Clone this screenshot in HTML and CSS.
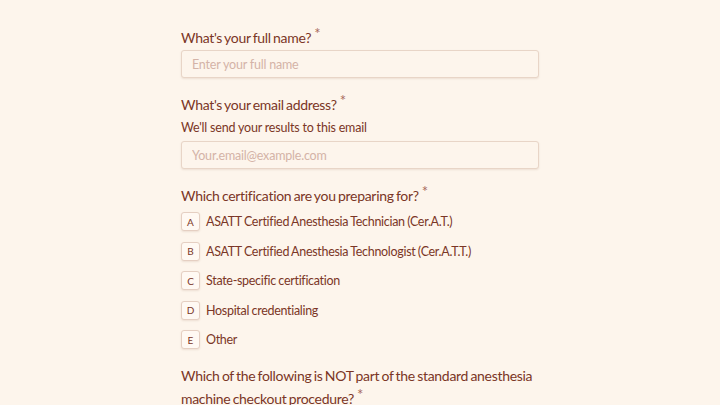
FILE: index.html
```html
<!DOCTYPE html>
<html lang="en">
<head>
    <meta charset="UTF-8">
    <title>Certification Quiz</title>
    <link rel="stylesheet" href="styles.css">
</head>
<body>
    <form class="quiz">
        <div class="question">
            <label class="label" for="fullname">What's your full name?<span class="req">*</span></label>
            <input class="field" id="fullname" type="text" placeholder="Enter your full name">
        </div>

        <div class="question">
            <label class="label" for="email">What's your email address?<span class="req">*</span></label>
            <p class="hint">We'll send your results to this email</p>
            <input class="field" id="email" type="email" placeholder="Your.email@example.com">
        </div>

        <div class="question">
            <div class="label">Which certification are you preparing for?<span class="req">*</span></div>
            <div class="options">
                <div class="option"><span class="key">A</span>ASATT Certified Anesthesia Technician (Cer.A.T.)</div>
                <div class="option"><span class="key">B</span>ASATT Certified Anesthesia Technologist (Cer.A.T.T.)</div>
                <div class="option"><span class="key">C</span>State-specific certification</div>
                <div class="option"><span class="key">D</span>Hospital credentialing</div>
                <div class="option"><span class="key">E</span>Other</div>
            </div>
        </div>

        <div class="question">
            <div class="label">Which of the following is NOT part of the standard anesthesia machine checkout procedure?<span class="req">*</span></div>
        </div>
    </form>
</body>
</html>
```

FILE: styles.css
```css
body {
    margin: 0;
    background-color: #fdf5ec;
    font-family: Lato, sans-serif;
    color: #7b3626;
}
.quiz {
    width: 358px;
    margin: 0 auto;
    padding-top: 24px;
}
.question {
    margin-bottom: 13px;
}
.label {
    display: block;
    font-size: 14px;
    line-height: 19px;
    letter-spacing: -0.3px;
    word-spacing: -1px;
    margin-bottom: 3px;
}
.req {
    color: #a86a5a;
    font-size: 15px;
    vertical-align: 4px;
    margin-left: 3px;
}
.hint {
    font-size: 12.5px;
    line-height: 16px;
    letter-spacing: -0.2px;
    margin: 6px 0 5px;
}
.field {
    display: block;
    box-sizing: border-box;
    width: 100%;
    height: 28px;
    padding: 0 10px;
    border: 1px solid #e8d5c7;
    border-radius: 3px;
    background-color: #fdf5ec;
    box-shadow: 0 1px 2px rgba(120, 70, 40, 0.12);
    font-family: inherit;
    font-size: 12.5px;
    letter-spacing: -0.2px;
    color: #7b3626;
}
.field::placeholder {
    color: #d4b3a7;
}
.options {
    display: flex;
    flex-direction: column;
    gap: 10.5px;
    padding: 4px 0 4px;
}
.option {
    display: flex;
    align-items: center;
    font-size: 12.5px;
    letter-spacing: -0.3px;
    word-spacing: -0.5px;
    height: 19px;
}
.key {
    display: flex;
    align-items: center;
    justify-content: center;
    box-sizing: border-box;
    width: 19px;
    height: 19px;
    margin-right: 6px;
    border: 1px solid #e5cfc2;
    border-radius: 3px;
    background-color: #fff9f3;
    box-shadow: 0 1px 2px rgba(120, 70, 40, 0.12);
    font-size: 10px;
    letter-spacing: 0;
}
```
